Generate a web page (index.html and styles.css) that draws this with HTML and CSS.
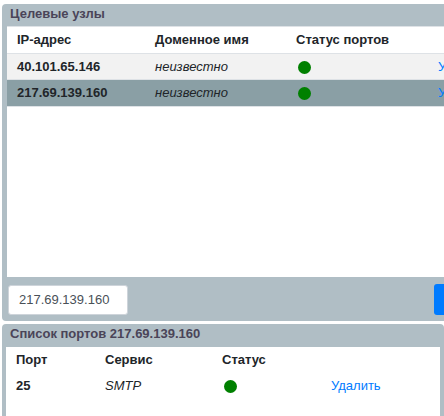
FILE: index.html
```html
<!DOCTYPE html>
<html lang="ru">
<head>
<meta charset="utf-8">
<title>Целевые узлы</title>
<link rel="stylesheet" href="styles.css">
</head>
<body>
<main class="page">
  <section class="panel panel-hosts">
    <h2 class="panel-title">Целевые узлы</h2>
    <div class="panel-body hosts-body">
      <table class="grid grid-lined">
        <colgroup><col class="col-ip"><col class="col-domain"><col class="col-ports"><col></colgroup>
        <thead>
          <tr><th scope="col">IP-адрес</th><th scope="col">Доменное имя</th><th scope="col">Статус портов</th><th></th></tr>
        </thead>
        <tbody>
          <tr class="striped"><th scope="row">40.101.65.146</th><td><em>неизвестно</em></td><td><span class="dot"></span></td><td><a href="#">Удалить</a></td></tr>
          <tr class="selected"><th scope="row">217.69.139.160</th><td><em>неизвестно</em></td><td><span class="dot"></span></td><td><a href="#">Удалить</a></td></tr>
        </tbody>
      </table>
    </div>
    <form class="add-form">
      <input class="address" type="text" value="217.69.139.160" aria-label="IP-адрес">
      <button class="add" type="button">Добавить</button>
    </form>
  </section>
  <section class="panel panel-ports">
    <h2 class="panel-title">Список портов 217.69.139.160</h2>
    <div class="panel-body ports-body">
      <table class="grid">
        <colgroup><col class="col-port"><col class="col-service"><col class="col-status"><col></colgroup>
        <thead>
          <tr><th scope="col">Порт</th><th scope="col">Сервис</th><th scope="col">Статус</th><th></th></tr>
        </thead>
        <tbody>
          <tr><th scope="row">25</th><td><em>SMTP</em></td><td><span class="dot"></span></td><td><a href="#">Удалить</a></td></tr>
        </tbody>
      </table>
    </div>
  </section>
</main>
</body>
</html>
```
FILE: styles.css
```css
* {
  box-sizing: border-box;
}

body {
  height: 100vh;
  margin: 0;
  overflow: hidden;
  background: #fff;
  color: #212529;
  font: 13px/20px "Liberation Sans", Arial, sans-serif;
}

.page {
  display: flex;
  flex-direction: column;
  gap: 3px;
  padding: 4px 0 0 2px;
}

.panel {
  display: flex;
  flex-direction: column;
  border-radius: 4px;
  background: #b0bec5;
}

.panel-hosts {
  min-width: 530px;
}

.panel-ports {
  min-height: 317px;
  width: calc(100vw - 2px);
}

.panel-title {
  margin: 0;
  padding: 0 8px 2px;
  color: #4a4458;
  font-size: 13px;
  line-height: 20px;
}

.panel-body {
  background: #fff;
}

.hosts-body {
  min-height: 251px;
  margin: 0 5px;
}

.ports-body {
  flex: 1;
  margin: 1px 4px 0;
}

.grid {
  width: 100%;
  table-layout: fixed;
  border-collapse: collapse;
}

.grid th,
.grid td {
  height: 26px;
  padding: 0 10px;
  text-align: left;
  vertical-align: middle;
}

.grid-lined th,
.grid-lined td {
  height: 27px;
  border-top: 1px solid #dee2e6;
}

.grid-lined .striped th,
.grid-lined .striped td {
  height: 26px;
}

.grid-lined tbody tr:last-child {
  border-bottom: 1px solid #dee2e6;
}

.striped {
  background: #f2f2f2;
}

.selected {
  background: #8a9fa5;
}

.col-ip {
  width: 138px;
}

.col-domain {
  width: 141px;
}

.col-ports {
  width: 142px;
}

.col-port {
  width: 89px;
}

.col-service {
  width: 117px;
}

.col-status {
  width: 109px;
}

.dot {
  display: block;
  width: 13px;
  height: 13px;
  margin: 1px 0 0 2px;
  border-radius: 50%;
  background: #008000;
}

a {
  color: #007bff;
  text-decoration: none;
}

.add-form {
  display: flex;
  align-items: center;
  justify-content: space-between;
  padding: 7px 6px 6px;
}

.address {
  width: 120px;
  height: 30px;
  padding: 0 10px;
  border: 1px solid #ced4da;
  border-radius: 3px;
  background: #fff;
  color: #495057;
  font: inherit;
}

.add {
  width: 92px;
  height: 31px;
  border: 0;
  border-radius: 3px;
  background: #007bff;
  color: #fff;
  font: inherit;
}
```
